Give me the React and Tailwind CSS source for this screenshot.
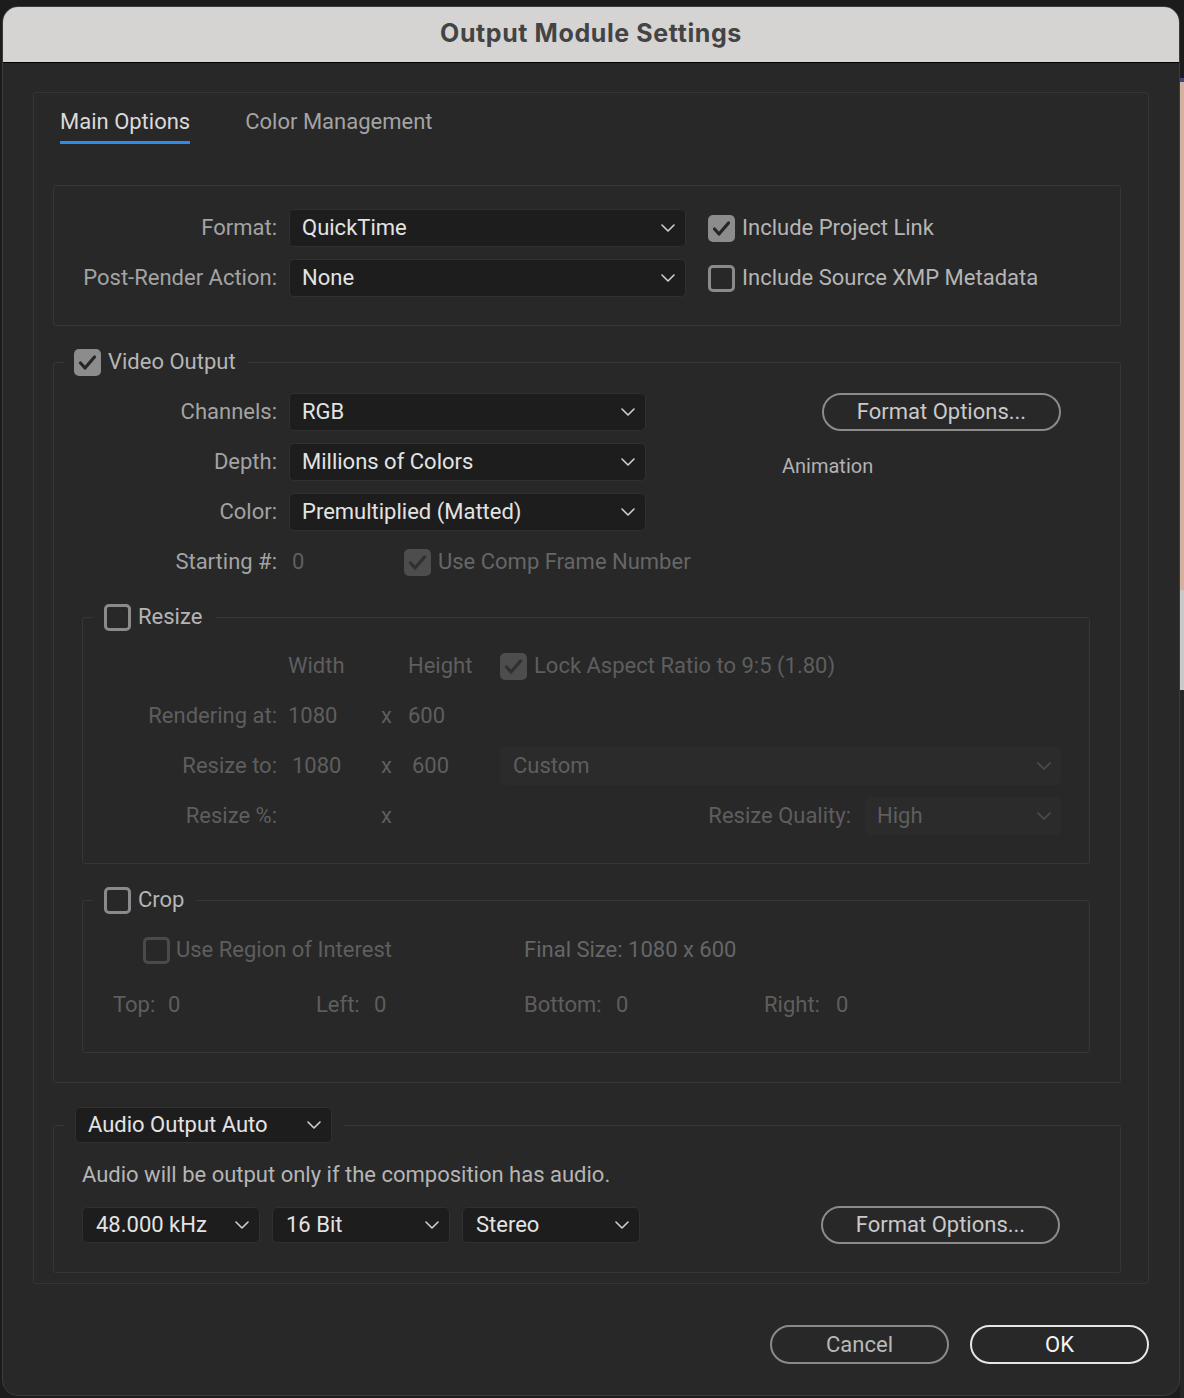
import React from "react";

const Chevron = ({ color = "#cfcfcf" }) => (
  <svg width="14" height="8" viewBox="0 0 14 8" fill="none" className="shrink-0">
    <path d="M1 1L7 7L13 1" stroke={color} strokeWidth="1.6" strokeLinecap="round" strokeLinejoin="round" />
  </svg>
);

function Checkbox({ checked, disabled }) {
  if (checked) {
    return (
      <div className={disabled ? "w-[27px] h-[27px] rounded-[5px] shrink-0 bg-[#4d4d4d]" : "w-[27px] h-[27px] rounded-[5px] shrink-0 bg-[#8c8c8c]"}>
        <svg width="27" height="27" viewBox="0 0 27 27" fill="none">
          <path d="M6.5 14L11 19L20.5 8" stroke={disabled ? "#303030" : "#262626"} strokeWidth="3.2" strokeLinecap="round" strokeLinejoin="round" />
        </svg>
      </div>
    );
  }
  return (
    <div className={disabled ? "w-[27px] h-[27px] rounded-[5px] shrink-0 border-[3px] border-[#4a4a4a]" : "w-[27px] h-[27px] rounded-[5px] shrink-0 border-[3px] border-[#8a8a8a]"} />
  );
}

function Dropdown({ value, className = "", textClass = "text-[#e3e3e3]", chevron = "#cfcfcf", pl = "pl-[12px]" }) {
  return (
    <div className={`flex items-center justify-between rounded-[5px] pr-[10px] ${pl} ${className}`}>
      <span className={textClass}>{value}</span>
      <Chevron color={chevron} />
    </div>
  );
}

const baseDrop = "h-[38px] bg-[#1d1d1d] border border-[#303030]";

function Label({ children, className = "" }) {
  return <div className={`text-right text-[#a3a3a3] ${className}`}>{children}</div>;
}

function PillButton({ children, className = "" }) {
  return (
    <div className={`flex items-center justify-center rounded-full border-2 ${className}`}>
      {children}
    </div>
  );
}

export default function App() {
  return (
    <div className="w-[1184px] h-[1398px] bg-[#1c1c1c] flex font-['Roboto',sans-serif] text-[22px] leading-[28px] overflow-hidden">
      <div className="w-[2px] shrink-0" />
      <div className="w-[1178px] shrink-0 mt-[6px] self-start rounded-[16px] bg-[#282828] border border-[#3b3b3b] overflow-hidden flex flex-col">
        {/* Title bar */}
        <div className="h-[56px] bg-[#d5d4d3] border-b border-black flex items-center justify-center pb-[3px]">
          <span className="font-['Inter',sans-serif] font-bold text-[25px] text-[#444444] tracking-[0.6px]">Output Module Settings</span>
        </div>

        {/* Body */}
        <div className="px-[30px] pt-[29px] pb-[31px] flex flex-col">
          <div className="border border-[#353535] rounded-[3px] pt-[15px] pb-[10px] flex flex-col">
            {/* Tabs */}
            <div className="flex pl-[26px] gap-[55px]">
              <div className="flex flex-col">
                <span className="text-[#dadada]">Main Options</span>
                <div className="mt-[5px] h-[3px] bg-[#2d8ceb]" />
              </div>
              <div className="flex flex-col">
                <span className="text-[#a3a3a3]">Color Management</span>
                <div className="mt-[5px] h-[3px]" />
              </div>
            </div>

            <div className="pl-[19px] pr-[27px] mt-[41px] flex flex-col">
              {/* Top group */}
              <div className="border border-[#363636] rounded-[3px] pt-[23px] pb-[28px] flex flex-col gap-[12px]">
                <div className="flex items-center">
                  <Label className="w-[223px]">Format:</Label>
                  <Dropdown value="QuickTime" className={`ml-[12px] w-[397px] ${baseDrop}`} />
                  <div className="ml-[22px] flex items-center gap-[7px]">
                    <Checkbox checked />
                    <span className="text-[#b5b5b5]">Include Project Link</span>
                  </div>
                </div>
                <div className="flex items-center">
                  <Label className="w-[223px]">Post-Render Action:</Label>
                  <Dropdown value="None" className={`ml-[12px] w-[397px] ${baseDrop}`} />
                  <div className="ml-[22px] flex items-center gap-[7px]">
                    <Checkbox />
                    <span className="text-[#b5b5b5]">Include Source XMP Metadata</span>
                  </div>
                </div>
              </div>

              {/* Video Output */}
              <fieldset className="mt-[22px] border border-[#363636] rounded-[3px] pb-[29px]">
                <legend className="ml-[10px] pl-[10px] pr-[12px] flex items-center gap-[7px] h-[28px]">
                  <Checkbox checked />
                  <span className="text-[#b5b5b5]">Video Output</span>
                </legend>
                <div className="pt-[17px] flex flex-col">
                  <div className="flex">
                    <div className="flex flex-col gap-[12px]">
                      <div className="flex items-center">
                        <Label className="w-[223px]">Channels:</Label>
                        <Dropdown value="RGB" className={`ml-[12px] w-[357px] ${baseDrop}`} />
                      </div>
                      <div className="flex items-center">
                        <Label className="w-[223px]">Depth:</Label>
                        <Dropdown value="Millions of Colors" className={`ml-[12px] w-[357px] ${baseDrop}`} />
                      </div>
                      <div className="flex items-center">
                        <Label className="w-[223px]">Color:</Label>
                        <Dropdown value="Premultiplied (Matted)" className={`ml-[12px] w-[357px] ${baseDrop}`} />
                      </div>
                    </div>
                    <div className="ml-[136px] flex flex-col">
                      <PillButton className="ml-[40px] w-[239px] h-[38px] border-[#8b8b8b] text-[#c9c9c9]">Format Options...</PillButton>
                      <span className="mt-[21px] text-[20px] text-[#b2b2b2]">Animation</span>
                    </div>
                  </div>

                  <div className="mt-[12px] h-[38px] flex items-center">
                    <Label className="w-[223px]">Starting #:</Label>
                    <div className="w-[127px] pl-[15px] text-[#5f5f5f]">0</div>
                    <Checkbox checked disabled />
                    <span className="ml-[7px] text-[#666666]">Use Comp Frame Number</span>
                  </div>

                  {/* Resize */}
                  <fieldset className="mt-[22px] ml-[28px] mr-[30px] border border-[#363636] rounded-[3px] pb-[28px]">
                    <legend className="ml-[10px] pl-[11px] pr-[13px] flex items-center gap-[7px] h-[28px]">
                      <Checkbox />
                      <span className="text-[#b5b5b5]">Resize</span>
                    </legend>
                    <div className="pt-[16px] flex flex-col gap-[12px] text-[#5e5e5e]">
                      <div className="h-[38px] flex items-center">
                        <div className="w-[194px]" />
                        <div className="w-[104px] pl-[11px]">Width</div>
                        <div className="w-[27px]" />
                        <div className="w-[92px]">Height</div>
                        <Checkbox checked disabled />
                        <span className="ml-[7px]">Lock Aspect Ratio to 9:5 (1.80)</span>
                      </div>
                      <div className="h-[38px] flex items-center">
                        <div className="w-[194px] text-right">Rendering at:</div>
                        <div className="w-[104px] pl-[11px]">1080</div>
                        <div className="w-[27px]">x</div>
                        <div className="w-[92px]">600</div>
                      </div>
                      <div className="h-[38px] flex items-center">
                        <div className="w-[194px] text-right">Resize to:</div>
                        <div className="w-[104px] pl-[15px]">1080</div>
                        <div className="w-[27px]">x</div>
                        <div className="w-[92px] pl-[4px]">600</div>
                        <Dropdown value="Custom" pl="pl-[13px]" className="w-[561px] h-[38px] bg-[#2b2b2b]" textClass="text-[#5e5e5e]" chevron="#4f4f4f" />
                      </div>
                      <div className="h-[38px] flex items-center">
                        <div className="w-[194px] text-right">Resize %:</div>
                        <div className="w-[104px]" />
                        <div className="w-[27px]">x</div>
                        <div className="w-[92px]" />
                        <div className="w-[351px] text-right">Resize Quality:</div>
                        <Dropdown value="High" className="ml-[14px] w-[196px] h-[38px] bg-[#2b2b2b]" textClass="text-[#5e5e5e]" chevron="#4f4f4f" />
                      </div>
                    </div>
                  </fieldset>

                  {/* Crop */}
                  <fieldset className="mt-[22px] ml-[28px] mr-[30px] border border-[#363636] rounded-[3px] pb-[28px]">
                    <legend className="ml-[10px] pl-[11px] pr-[13px] flex items-center gap-[7px] h-[28px]">
                      <Checkbox />
                      <span className="text-[#b5b5b5]">Crop</span>
                    </legend>
                    <div className="pt-[17px] flex flex-col gap-[17px] text-[#5e5e5e]">
                      <div className="h-[38px] flex items-center pl-[60px]">
                        <div className="w-[381px] flex items-center gap-[6px]">
                          <Checkbox disabled />
                          <span>Use Region of Interest</span>
                        </div>
                        <span className="text-[#666666]">Final Size: 1080 x 600</span>
                      </div>
                      <div className="h-[38px] flex items-center pl-[30px]">
                        <div className="w-[203px] flex">
                          <span className="w-[55px]">Top:</span>
                          <span>0</span>
                        </div>
                        <div className="w-[208px] flex">
                          <span className="w-[58px]">Left:</span>
                          <span>0</span>
                        </div>
                        <div className="w-[240px] flex">
                          <span className="w-[92px]">Bottom:</span>
                          <span>0</span>
                        </div>
                        <div className="flex">
                          <span className="w-[72px]">Right:</span>
                          <span>0</span>
                        </div>
                      </div>
                    </div>
                  </fieldset>
                </div>
              </fieldset>

              {/* Audio */}
              <fieldset className="mt-[24px] border border-[#363636] rounded-[3px] pb-[28px]">
                <legend className="ml-[10px] pl-[11px] pr-[12px] flex items-center">
                  <Dropdown value="Audio Output Auto" className="w-[257px] h-[36px] bg-[#1d1d1d] border border-[#303030]" />
                </legend>
                <div className="pt-[18px] pl-[28px] flex flex-col">
                  <span className="text-[#b5b5b5]">Audio will be output only if the composition has audio.</span>
                  <div className="mt-[17px] flex items-center">
                    <Dropdown value="48.000 kHz" pl="pl-[13px]" className="w-[178px] h-[36px] bg-[#1d1d1d] border border-[#303030]" />
                    <Dropdown value="16 Bit" pl="pl-[13px]" className="ml-[12px] w-[178px] h-[36px] bg-[#1d1d1d] border border-[#303030]" />
                    <Dropdown value="Stereo" pl="pl-[13px]" className="ml-[12px] w-[178px] h-[36px] bg-[#1d1d1d] border border-[#303030]" />
                    <PillButton className="ml-[181px] w-[239px] h-[38px] border-[#8b8b8b] text-[#c9c9c9]">Format Options...</PillButton>
                  </div>
                </div>
              </fieldset>
            </div>
          </div>

          {/* Bottom buttons */}
          <div className="mt-[41px] flex justify-end gap-[21px]">
            <PillButton className="w-[179px] h-[39px] border-[#8a8a8a] text-[#b9b9b9]">Cancel</PillButton>
            <PillButton className="w-[179px] h-[39px] border-[#e6e6e6] text-[#f4f4f4]">OK</PillButton>
          </div>
        </div>
      </div>
      <div className="w-[4px] shrink-0 flex flex-col">
        <div className="h-[78px] bg-[#1c1c1c]" />
        <div className="h-[4px] bg-[#3a4a7a]" />
        <div className="h-[508px] bg-[#d3b1a1]" />
        <div className="h-[100px] bg-[#c9c9c9]" />
        <div className="flex-1 bg-[#262626]" />
      </div>
    </div>
  );
}
